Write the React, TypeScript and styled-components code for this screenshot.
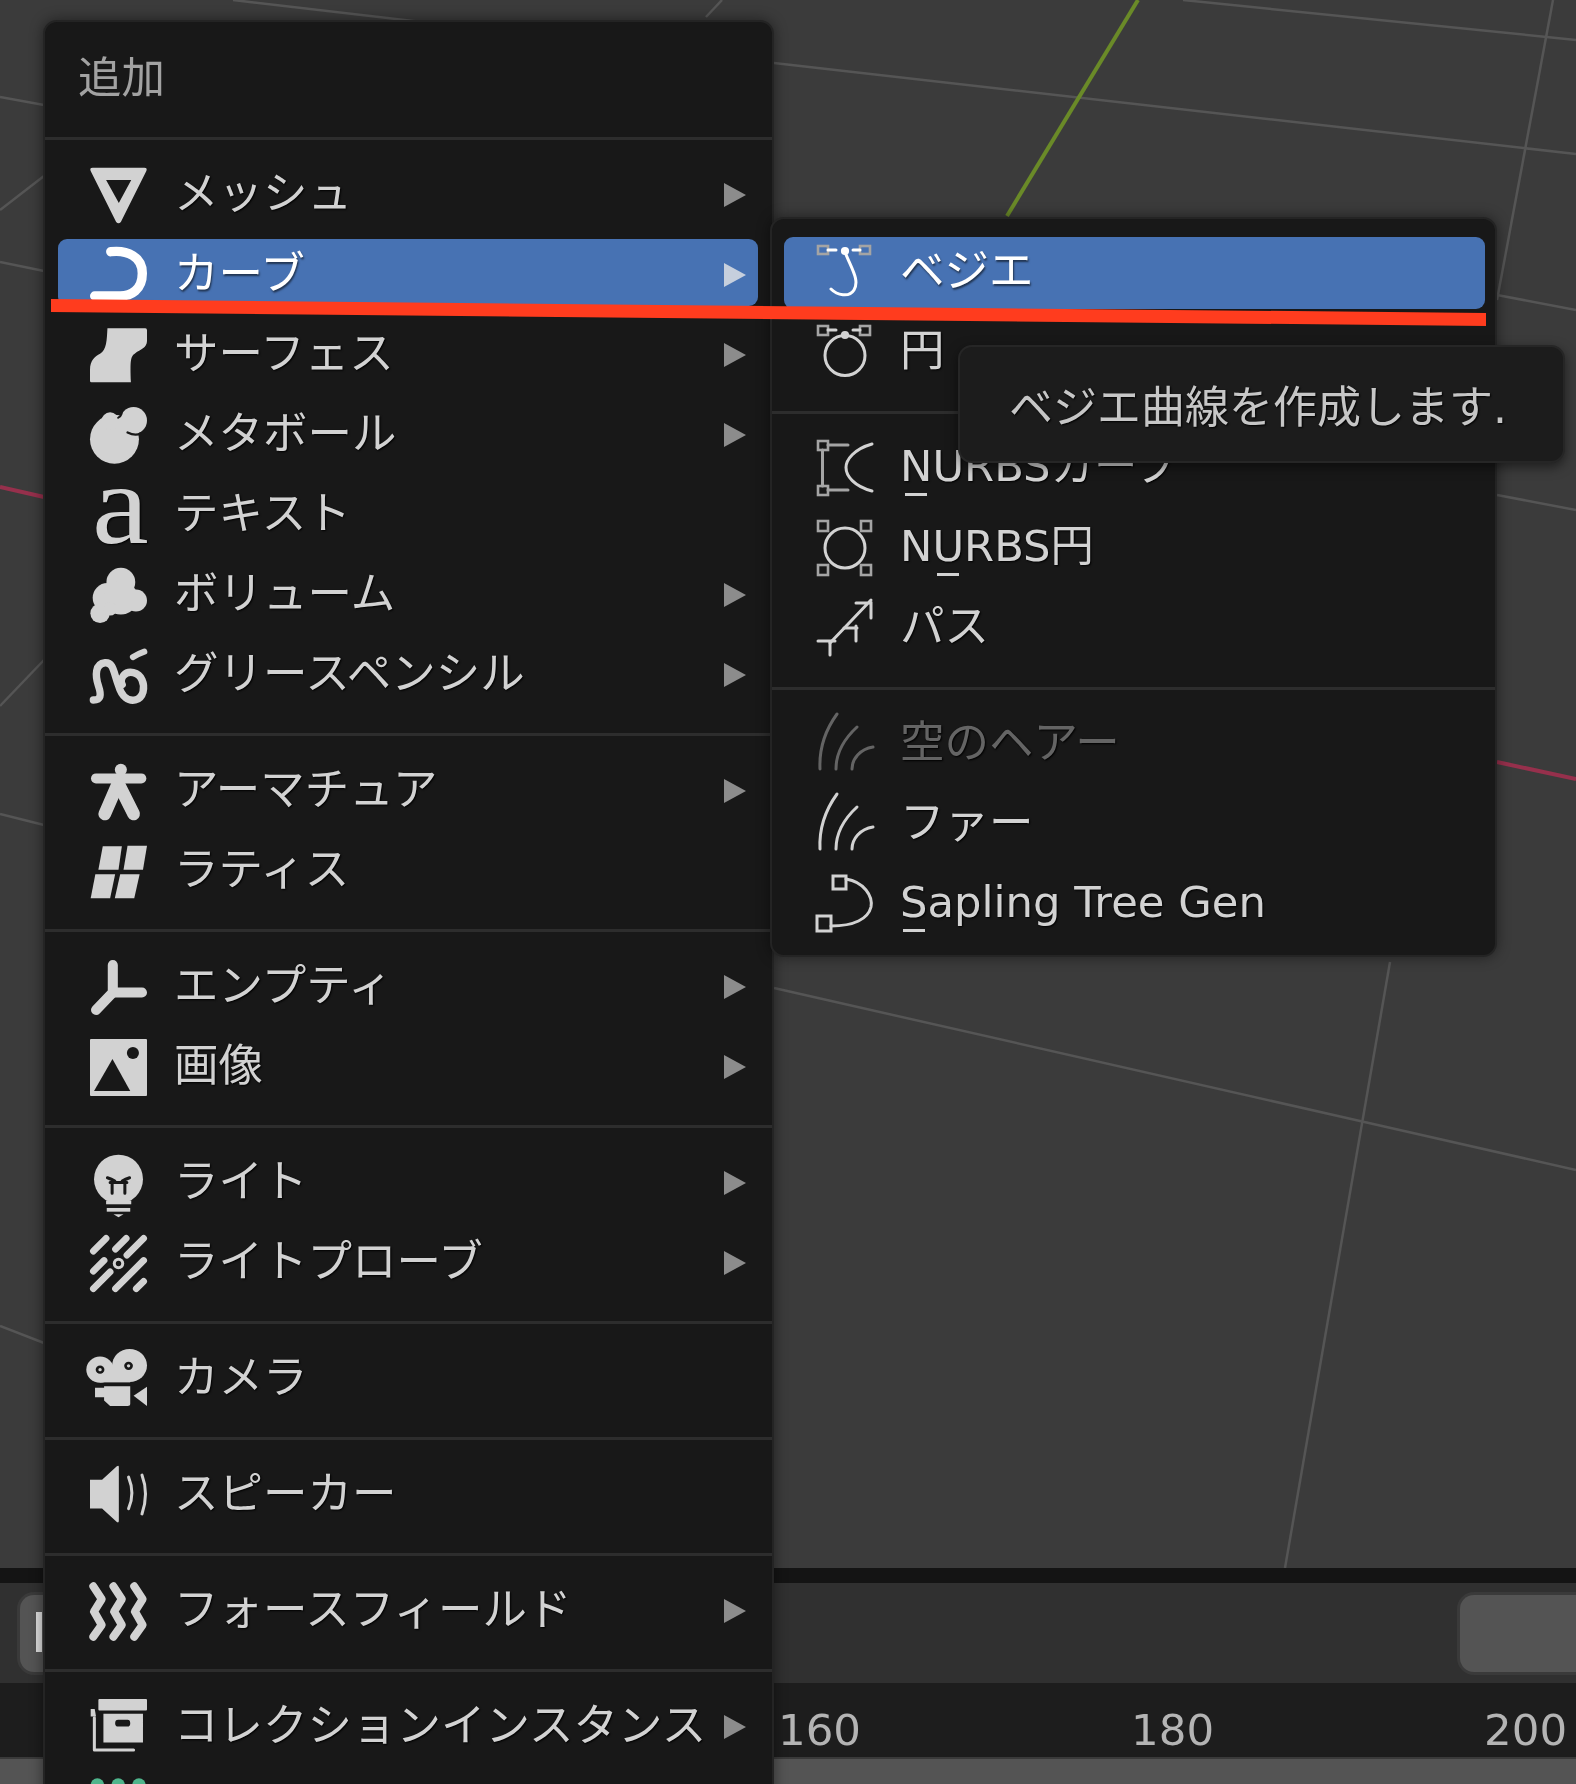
/* -------------------------------------------------------------------------- */
/*                            External Dependencies                           */
/* -------------------------------------------------------------------------- */

import React from 'react';
import styled, { createGlobalStyle } from 'styled-components';

/* -------------------------------------------------------------------------- */
/*                                    Icons                                   */
/* -------------------------------------------------------------------------- */

const PANEL = '#181818';

const Glyph = styled.svg.attrs({ viewBox: '0 0 170 170' })`
  width: 57px;
  height: 57px;
  margin-top: 5px;
  flex: none;
  overflow: visible;
  fill: currentColor;
`;

const LineGlyph = styled.svg.attrs({ viewBox: '0 0 57 57' })`
  width: 57px;
  height: 57px;
  flex: none;
  overflow: visible;
  fill: none;
  stroke: currentColor;
  stroke-width: 3;
  stroke-linecap: round;
`;

const Stroke = styled.path<{ $w: number }>`
  fill: none;
  stroke: currentColor;
  stroke-width: ${(p) => p.$w};
  stroke-linecap: round;
  stroke-linejoin: round;
`;

const Cut = styled(Stroke)`
  stroke: ${PANEL};
`;

const Handle = styled.rect`
  stroke: #a4a4a4;
  stroke-width: 2.6;
`;

const IconFont = styled.text`
  font-family: 'Liberation Serif', serif;
  font-size: 340px;
`;

const mainIcons: Record<string, React.ReactNode> = {
  mesh: (
    <Glyph>
      <path
        fillRule="evenodd"
        d="M8 2H162Q172 2 168 12L92 164Q85 172 78 164L2 12Q-2 2 8 2ZM48 39H123L86 107Z"
      />
    </Glyph>
  ),
  curve: (
    <Glyph>
      <Stroke $w={28} d="M62 14C112 8 156 30 156 78C156 128 122 146 90 146H14" />
    </Glyph>
  ),
  surface: (
    <Glyph>
      <path d="M52 4H165Q170 4 170 10V42C170 62 150 68 135 78C120 88 120 100 122 165H4Q0 165 0 160V128C0 100 15 88 30 80C50 68 50 40 52 4Z" />
    </Glyph>
  ),
  meta: (
    <Glyph>
      <circle cx="73" cy="96" r="73" />
      <circle cx="130" cy="40" r="40" />
      <circle cx="60" cy="42" r="26" />
      <Cut $w={6} d="M92 8Q100 22 84 32" />
      <Cut $w={7} d="M112 76Q136 88 152 78" />
    </Glyph>
  ),
  text: (
    <Glyph>
      <IconFont transform="translate(6 168) scale(1.12 1)">a</IconFont>
    </Glyph>
  ),
  volume: (
    <Glyph>
      <circle cx="92" cy="45" r="43" />
      <circle cx="137" cy="100" r="33" />
      <circle cx="52" cy="92" r="44" />
      <circle cx="30" cy="138" r="29" />
      <circle cx="92" cy="92" r="50" />
      <circle cx="60" cy="125" r="20" />
    </Glyph>
  ),
  grease: (
    <Glyph>
      <Stroke
        $w={22}
        d="M10 158C32 158 35 145 25 115C15 85 15 50 45 47C70 45 70 75 85 115C95 150 115 162 135 158C160 152 165 120 155 98C145 75 115 68 100 85C92 95 92 105 96 112"
      />
      <Stroke $w={18} d="M128 30Q145 20 162 14" />
    </Glyph>
  ),
  armature: (
    <Glyph>
      <circle cx="92" cy="20" r="18" />
      <Stroke $w={30} d="M18 46H153" />
      <Stroke $w={38} d="M84 60L44 152" />
      <Stroke $w={38} d="M84 60L130 152" />
    </Glyph>
  ),
  lattice: (
    <Glyph>
      <path d="M38 10H95L85 80H25Z" />
      <path d="M112 8H170L158 80H100Z" />
      <path d="M16 93H75L60 165H2Z" />
      <path d="M90 93H148L132 165H74Z" />
    </Glyph>
  ),
  empty: (
    <Glyph>
      <Stroke $w={30} d="M68 18V100L18 152" />
      <Stroke $w={30} d="M68 100H155" />
    </Glyph>
  ),
  image: (
    <Glyph>
      <rect width="170" height="170" rx="3" />
      <path d="M12 155H120L67 60Z" fill={PANEL} />
      <circle cx="128" cy="42" r="18" fill={PANEL} />
    </Glyph>
  ),
  light: (
    <Glyph>
      <circle cx="85" cy="72" r="73" />
      <rect x="50" y="100" width="70" height="28" />
      <rect x="48" y="136" width="75" height="11" />
      <rect x="50" y="158" width="70" height="11" />
      <path d="M70 177H100L85 186Z" />
      <Cut $w={9} d="M52 68Q64 72 74 78M118 68Q106 72 96 78M60 82H110" />
      <Cut $w={9} d="M66 82V114M104 82V114" />
    </Glyph>
  ),
  probe: (
    <Glyph>
      <Stroke $w={20} d="M10 48L48 10M10 108L42 76M76 42L108 10M10 160L60 110M110 60L160 10M76 160L160 76M138 160L160 138" />
      <circle cx="85" cy="85" r="17" />
      <circle cx="85" cy="85" r="8" fill={PANEL} />
    </Glyph>
  ),
  camera: (
    <Glyph>
      <g transform="translate(0 -9) scale(1 0.95)">
        <circle cx="30" cy="68" r="41" />
        <circle cx="118" cy="55" r="52" />
        <rect x="30" y="60" width="90" height="48" />
        <circle cx="30" cy="68" r="13" fill={PANEL} />
        <circle cx="30" cy="68" r="5" />
        <circle cx="115" cy="56" r="13" fill={PANEL} />
        <circle cx="115" cy="56" r="5" />
        <path d="M42 120H120V175Q120 182 112 182H60L42 165V155H15V125H42Z" />
        <path d="M130 150L170 122V182Z" />
      </g>
    </Glyph>
  ),
  speaker: (
    <Glyph>
      <g transform="translate(0 -6)">
        <path d="M0 44H36L80 4Q86 0 86 6V166Q86 174 80 170L36 130H0Z" />
        <Stroke $w={9} d="M115 36Q135 85 115 130" />
        <Stroke $w={9} d="M155 30Q176 85 155 146" />
      </g>
    </Glyph>
  ),
  force: (
    <Glyph>
      <Stroke $w={24} d="M10 10L35 48L12 85L35 125L10 160" />
      <Stroke $w={24} d="M70 10L95 48L72 85L95 125L70 160" />
      <Stroke $w={24} d="M132 10L157 48L134 85L157 125L132 160" />
    </Glyph>
  ),
  collection: (
    <Glyph>
      <rect x="25" y="0" width="145" height="34" rx="3" />
      <path d="M2 30H14L18 52H2Z" />
      <path
        fillRule="evenodd"
        d="M40 44H158V130H40ZM84 62H112Q120 62 120 72Q120 82 112 82H84Q75 82 75 72Q75 62 84 62Z"
      />
      <Stroke $w={9} d="M13 56V152H130" />
    </Glyph>
  ),
  green: (
    <Glyph>
      <circle cx="22" cy="24" r="20" />
      <circle cx="84" cy="24" r="20" />
      <circle cx="146" cy="24" r="20" />
    </Glyph>
  ),
};

const bezierIcon = (
  <LineGlyph>
    <Handle x="2" y="4" width="10" height="8" />
    <Handle x="44" y="4" width="10" height="8" />
    <path d="M12 8H20M37 8H44" />
    <path d="M29 10C35 26 44 38 38 48C33 56 21 53 15 47" />
    <circle cx="29" cy="9" r="2.6" fill="currentColor" />
  </LineGlyph>
);

const circleIcon = (
  <LineGlyph>
    <Handle x="2" y="4" width="10" height="9" />
    <Handle x="44" y="4" width="10" height="9" />
    <path d="M12 8H20M37 8H44" />
    <circle cx="29" cy="33.5" r="20" />
    <circle cx="29" cy="13" r="2.6" fill="currentColor" />
  </LineGlyph>
);

const nurbsCurveIcon = (
  <LineGlyph>
    <Handle x="2" y="3" width="10" height="9" />
    <Handle x="2" y="48" width="10" height="9" />
    <path stroke="#a4a4a4" d="M6.5 12V48M12 7H32M12 52H32" />
    <path d="M56 6C38 11 30 22 30 29.5C30 38 38 48 56 53" />
  </LineGlyph>
);

const nurbsCircleIcon = (
  <LineGlyph>
    <Handle x="2" y="3" width="10" height="10" />
    <Handle x="45" y="3" width="10" height="10" />
    <Handle x="2" y="47" width="10" height="10" />
    <Handle x="45" y="47" width="10" height="10" />
    <circle cx="29" cy="30" r="20" />
  </LineGlyph>
);

const pathIcon = (
  <LineGlyph>
    <path d="M14 45L55 2M40 5H55V20" />
    <path d="M28 30H41M40 28V43" />
    <path d="M2 43H19M14 43V57" />
  </LineGlyph>
);

const hairIcon = (
  <LineGlyph>
    <path d="M4 55C3 35 8 18 21 0M20 55C20 40 28 25 41 13M36 55C36 45 44 35 57 33" />
  </LineGlyph>
);

const saplingIcon = (
  <LineGlyph>
    <rect x="17" y="2" width="13" height="13" />
    <rect x="1" y="42" width="14" height="15" />
    <path d="M30 5C48 8 57 22 55 33C52 45 38 52 15 52" />
  </LineGlyph>
);

/* -------------------------------------------------------------------------- */
/*                                    Data                                    */
/* -------------------------------------------------------------------------- */

type MainItem = { label: string; icon: string; arrow?: boolean; active?: boolean };

const mainSections: MainItem[][] = [
  [
    { label: 'メッシュ', icon: 'mesh', arrow: true },
    { label: 'カーブ', icon: 'curve', arrow: true, active: true },
    { label: 'サーフェス', icon: 'surface', arrow: true },
    { label: 'メタボール', icon: 'meta', arrow: true },
    { label: 'テキスト', icon: 'text' },
    { label: 'ボリューム', icon: 'volume', arrow: true },
    { label: 'グリースペンシル', icon: 'grease', arrow: true },
  ],
  [
    { label: 'アーマチュア', icon: 'armature', arrow: true },
    { label: 'ラティス', icon: 'lattice' },
  ],
  [
    { label: 'エンプティ', icon: 'empty', arrow: true },
    { label: '画像', icon: 'image', arrow: true },
  ],
  [
    { label: 'ライト', icon: 'light', arrow: true },
    { label: 'ライトプローブ', icon: 'probe', arrow: true },
  ],
  [{ label: 'カメラ', icon: 'camera' }],
  [{ label: 'スピーカー', icon: 'speaker' }],
  [{ label: 'フォースフィールド', icon: 'force', arrow: true }],
  [{ label: 'コレクションインスタンス', icon: 'collection', arrow: true }],
];

/* -------------------------------------------------------------------------- */
/*                                  Component                                 */
/* -------------------------------------------------------------------------- */

const App = () => (
  <>
    <GlobalStyle />
    <Screen>
      <Viewport>
        <GridDrawing viewBox="0 0 1576 1568">
          <GridLine d="M233 0L774 63L1576 154" />
          <GridLine d="M1183 0L1576 40" />
          <GridLine d="M706 17L722 0" />
          <GridLine d="M1553 0L1497 300" />
          <GridLine d="M1497 295L1576 310" />
          <GridLine d="M1497 495L1576 510" />
          <GridLine d="M774 988L1360 1121L1576 1170" />
          <GridLine d="M1390 962L1285 1568" />
          <GridLine d="M0 97L44 105" />
          <GridLine d="M0 210L44 176" />
          <GridLine d="M0 262L44 271" />
          <GridLine d="M0 706L44 660" />
          <GridLine d="M0 814L44 825" />
          <GridLine d="M0 1326L44 1343" />
          <AxisLine $color="#6a8a28" d="M1138 0L1007 216" />
          <AxisLine $color="#96304c" d="M0 487L44 497" />
          <AxisLine $color="#96304c" d="M1497 762L1576 779" />
        </GridDrawing>
      </Viewport>
      <Band />
      <TimelineHeader>
        <ToolButton>
          <ToolMark />
        </ToolButton>
        <WideButton />
      </TimelineHeader>
      <Ruler>
        <Tick>160</Tick>
        <Tick>180</Tick>
        <Tick>200</Tick>
      </Ruler>
      <Track />

      <AddMenu>
        <MenuTitle>追加</MenuTitle>
        {mainSections.map((section, i) => (
          <React.Fragment key={i}>
            <Divider />
            {section.map((item) => (
              <MainRow key={item.label} $active={item.active}>
                {mainIcons[item.icon]}
                <Label>{item.label}</Label>
                {item.arrow && <Arrow $active={item.active} />}
              </MainRow>
            ))}
          </React.Fragment>
        ))}
        <GreenRow>{mainIcons.green}</GreenRow>
      </AddMenu>

      <SubMenu>
        <SubRow $active>
          {bezierIcon}
          <Label>ベジエ</Label>
        </SubRow>
        <SubRow>
          {circleIcon}
          <Label>円</Label>
        </SubRow>
        <SubDivider />
        <SubRow>
          {nurbsCurveIcon}
          <LatinLabel>
            <Mnemonic>N</Mnemonic>URBSカーブ
          </LatinLabel>
        </SubRow>
        <SubRow>
          {nurbsCircleIcon}
          <LatinLabel>
            N<Mnemonic>U</Mnemonic>RBS円
          </LatinLabel>
        </SubRow>
        <SubRow>
          {pathIcon}
          <Label>パス</Label>
        </SubRow>
        <SubDivider />
        <SubRow $disabled>
          {hairIcon}
          <Label>空のヘアー</Label>
        </SubRow>
        <SubRow>
          {hairIcon}
          <Label>ファー</Label>
        </SubRow>
        <SubRow>
          {saplingIcon}
          <LatinLabel>
            <Mnemonic>S</Mnemonic>apling Tree Gen
          </LatinLabel>
        </SubRow>
      </SubMenu>

      <Tooltip>ベジエ曲線を作成します.</Tooltip>

      <Annotation viewBox="0 0 1576 1784">
        <polygon points="51,299 1486,313 1486,326 51,312" fill="#ff3c1e" />
      </Annotation>
    </Screen>
  </>
);

/* -------------------------------------------------------------------------- */
/*                                    STYLES                                  */
/* -------------------------------------------------------------------------- */

const GlobalStyle = createGlobalStyle`
  html, body {
    margin: 0;
    padding: 0;
    background: #3c3c3c;
  }
  body {
    font-family: 'DejaVu Sans', 'Noto Sans CJK JP', sans-serif;
  }
`;

const Screen = styled.div`
  position: relative;
  width: 1576px;
  height: 1784px;
  overflow: hidden;
  display: flex;
  flex-direction: column;
  filter: blur(0.5px);
`;

/* ---------------------------- 3D VIEWPORT + TIMELINE ---------------------------- */

const Viewport = styled.div`
  position: relative;
  height: 1568px;
  flex: none;
  background: #3b3b3b;
`;

const GridDrawing = styled.svg`
  display: block;
  width: 100%;
  height: 100%;
`;

const GridLine = styled.path`
  fill: none;
  stroke: #555555;
  stroke-width: 2.5;
`;

const AxisLine = styled.path<{ $color: string }>`
  fill: none;
  stroke: ${(p) => p.$color};
  stroke-width: 4;
`;

const Band = styled.div`
  height: 15px;
  flex: none;
  background: #141414;
`;

const TimelineHeader = styled.div`
  height: 100px;
  flex: none;
  display: flex;
  justify-content: space-between;
  align-items: flex-start;
  padding-top: 12px;
  box-sizing: border-box;
  background: #303030;
`;

const ToolButton = styled.div`
  width: 120px;
  height: 77px;
  margin-left: 20px;
  padding: 17px 0 0 16px;
  box-sizing: border-box;
  border-radius: 14px;
  background: #545454;
  box-shadow: 0 0 0 3px #3a3a3a;
`;

const ToolMark = styled.div`
  width: 6px;
  height: 40px;
  background: #dddddd;
`;

const WideButton = styled.div`
  width: 160px;
  height: 77px;
  margin-right: -44px;
  border-radius: 14px;
  background: #545454;
  box-shadow: 0 0 0 3px #3a3a3a;
`;

const Ruler = styled.div`
  height: 74px;
  flex: none;
  display: flex;
  align-items: center;
  gap: 270px;
  padding: 22px 0 0 778px;
  box-sizing: border-box;
  background: #1d1d1d;
`;

const Tick = styled.span`
  font-size: 43.5px;
  color: #b4b4b4;
  line-height: 1;
`;

const Track = styled.div`
  flex: 1;
  background: #545454;
  border-top: 2px solid #3a3a3a;
`;

/* ---------------------------- MENUS ---------------------------- */

const Panel = styled.div`
  position: absolute;
  box-sizing: border-box;
  background: ${PANEL};
  border: 2px solid #242424;
  border-radius: 14px;
  box-shadow: 0 0 14px rgba(0, 0, 0, 0.45);
`;

const AddMenu = styled(Panel)`
  left: 43px;
  top: 20px;
  width: 731px;
  height: 1830px;
`;

const SubMenu = styled(Panel)`
  left: 770px;
  top: 217px;
  width: 727px;
  height: 740px;
  padding-top: 11px;
`;

const MenuTitle = styled.div`
  height: 95px;
  padding: 10px 0 0 33px;
  box-sizing: border-box;
  display: flex;
  align-items: center;
  font-size: 43.5px;
  color: #a2a2a2;
`;

const Divider = styled.div`
  height: 3px;
  margin: 20px 0 13px;
  background: #2d2d2d;
`;

const SubDivider = styled(Divider)`
  margin: 21px 0 12px;
`;

const Row = styled.div<{ $active?: boolean; $disabled?: boolean }>`
  position: relative;
  height: 80px;
  display: flex;
  align-items: center;
  padding: 0 26px 0 45px;
  box-sizing: border-box;
  color: ${(p) => (p.$active ? '#ffffff' : p.$disabled ? '#646464' : '#d2d2d2')};
  text-shadow: ${(p) => (p.$active ? '1px 2px 2px rgba(0, 0, 0, 0.55)' : '1px 1px 2px #000')};

  > * {
    position: relative;
  }

  > svg {
    margin-right: 27px;
  }

  &::before {
    content: '';
    position: absolute;
    border-radius: 9px;
    background: ${(p) => (p.$active ? '#4772b3' : 'transparent')};
  }
`;

const MainRow = styled(Row)`
  &::before {
    inset: 6px 14px 7px 13px;
  }
`;

const SubRow = styled(Row)`
  padding-left: 44px;

  &::before {
    inset: 7px 10px 1px 12px;
  }
`;

const GreenRow = styled(Row)`
  color: #4fb58c;
  align-items: flex-start;

  > svg {
    margin-top: 12px;
  }
`;

const Label = styled.span`
  font-size: 44.5px;
  line-height: 1;
  white-space: nowrap;
  margin-top: 2px;
`;

const LatinLabel = styled(Label)`
  font-size: 43.3px;
`;

const Mnemonic = styled.span`
  position: relative;

  &::after {
    content: '';
    position: absolute;
    left: 50%;
    bottom: -5px;
    width: 22px;
    height: 3px;
    margin-left: -11px;
    background: currentColor;
  }
`;

const Arrow = styled.span<{ $active?: boolean }>`
  width: 0;
  height: 0;
  margin: 4px 0 0 auto;
  border-style: solid;
  border-width: 12px 0 12px 22px;
  border-color: transparent transparent transparent ${(p) => (p.$active ? '#c6cfdd' : '#8c8c8c')};
`;

const Tooltip = styled.div`
  position: absolute;
  left: 958px;
  top: 345px;
  width: 607px;
  height: 118px;
  box-sizing: border-box;
  display: flex;
  align-items: center;
  padding: 0 0 0 49px;
  font-size: 44px;
  white-space: nowrap;
  color: #c6c6c6;
  text-shadow: 1px 1px 2px #000;
  background: #1c1c1c;
  border: 2px solid #262626;
  border-radius: 14px;
  box-shadow: 0 4px 12px rgba(0, 0, 0, 0.5);
`;

const Annotation = styled.svg`
  position: absolute;
  left: 0;
  top: 0;
  width: 1576px;
  height: 1784px;
  pointer-events: none;
`;

export default App;
